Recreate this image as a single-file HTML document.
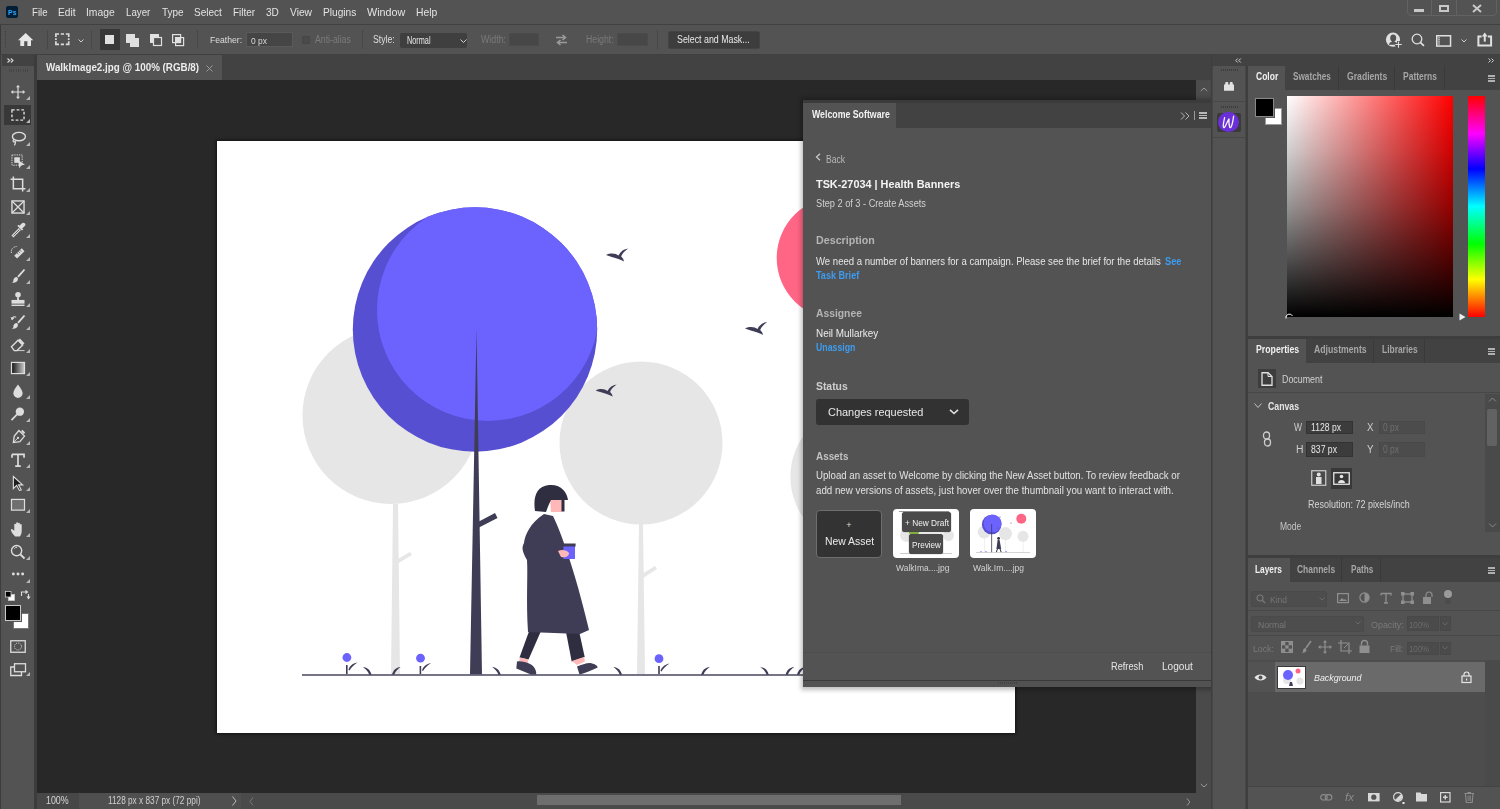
<!DOCTYPE html>
<html><head><meta charset="utf-8">
<style>
*{margin:0;padding:0;box-sizing:border-box}
html,body{width:1500px;height:809px;overflow:hidden;background:#535353;font-family:"Liberation Sans",sans-serif}
.a{position:absolute}
.t{position:absolute;white-space:nowrap;line-height:1;transform-origin:0 0}
svg.a{overflow:visible}
</style></head><body>
<div class="a" style="left:0px;top:0px;width:1500px;height:24px;background:#535353;"></div>
<div class="a" style="left:0px;top:23.5px;width:1500px;height:1.5px;background:#414141;"></div>
<div class="a" style="left:6px;top:6px;width:12px;height:12px;background:#001e36;border-radius:2px"></div>
<span class="t" style="left:7.5px;top:9.45px;font-size:7.5px;color:#31a8ff;font-weight:bold;transform:scaleX(0.9265);">Ps</span>
<span class="t" style="left:31.7px;top:7.41px;font-size:10.5px;color:#e3e3e3;transform:scaleX(0.9161);">File</span>
<span class="t" style="left:58px;top:7.41px;font-size:10.5px;color:#e3e3e3;transform:scaleX(0.9672);">Edit</span>
<span class="t" style="left:86.3px;top:7.41px;font-size:10.5px;color:#e3e3e3;transform:scaleX(0.9834);">Image</span>
<span class="t" style="left:126.2px;top:7.41px;font-size:10.5px;color:#e3e3e3;transform:scaleX(0.9251);">Layer</span>
<span class="t" style="left:161.7px;top:7.41px;font-size:10.5px;color:#e3e3e3;transform:scaleX(0.9488);">Type</span>
<span class="t" style="left:193.8px;top:7.41px;font-size:10.5px;color:#e3e3e3;transform:scaleX(0.9560);">Select</span>
<span class="t" style="left:232.5px;top:7.41px;font-size:10.5px;color:#e3e3e3;transform:scaleX(0.9514);">Filter</span>
<span class="t" style="left:265.8px;top:7.41px;font-size:10.5px;color:#e3e3e3;transform:scaleX(0.9611);">3D</span>
<span class="t" style="left:289.7px;top:7.41px;font-size:10.5px;color:#e3e3e3;transform:scaleX(0.9747);">View</span>
<span class="t" style="left:322.5px;top:7.41px;font-size:10.5px;color:#e3e3e3;transform:scaleX(0.9669);">Plugins</span>
<span class="t" style="left:366.7px;top:7.41px;font-size:10.5px;color:#e3e3e3;transform:scaleX(1.0256);">Window</span>
<span class="t" style="left:416.2px;top:7.41px;font-size:10.5px;color:#e3e3e3;transform:scaleX(0.9863);">Help</span>
<div class="a" style="left:1407px;top:-2px;width:90px;height:18px;background:transparent;border:1px solid #626262;border-radius:0 0 4px 4px"></div>
<div class="a" style="left:1431px;top:0px;width:1px;height:16px;background:#626262;"></div>
<div class="a" style="left:1456px;top:0px;width:1px;height:16px;background:#626262;"></div>
<div class="a" style="left:1414px;top:9px;width:10px;height:3px;background:#c8c8c8;"></div>
<div class="a" style="left:1439px;top:5px;width:10px;height:7px;background:transparent;border:2px solid #c8c8c8"></div>
<svg class="a" style="left:1472px;top:4px;" width="10" height="9" viewBox="0 0 10 9"><path d="M1 1L9 8M9 1L1 8" stroke="#c8c8c8" stroke-width="2"/></svg>
<div class="a" style="left:0px;top:25px;width:1500px;height:29px;background:#535353;"></div>
<div class="a" style="left:0px;top:25px;width:1px;height:29px;background:#3a3a3a;"></div>
<div class="a" style="left:0px;top:54px;width:1500px;height:1px;background:#404040;"></div>
<div class="a" style="left:5px;top:31px;width:1px;height:1px;background:#3e3e3e;"></div>
<div class="a" style="left:5px;top:33px;width:1px;height:1px;background:#3e3e3e;"></div>
<div class="a" style="left:5px;top:35px;width:1px;height:1px;background:#3e3e3e;"></div>
<div class="a" style="left:5px;top:37px;width:1px;height:1px;background:#3e3e3e;"></div>
<div class="a" style="left:5px;top:39px;width:1px;height:1px;background:#3e3e3e;"></div>
<div class="a" style="left:5px;top:41px;width:1px;height:1px;background:#3e3e3e;"></div>
<div class="a" style="left:5px;top:43px;width:1px;height:1px;background:#3e3e3e;"></div>
<div class="a" style="left:5px;top:45px;width:1px;height:1px;background:#3e3e3e;"></div>
<div class="a" style="left:5px;top:47px;width:1px;height:1px;background:#3e3e3e;"></div>
<svg class="a" style="left:18px;top:33px;" width="16" height="14" viewBox="0 0 16 14"><path d="M7.7 0L15.3 7.3H13V13.1H9.4V8.3H6.2V13.1H2.3V7.3H0Z" fill="#e6e6e6"/></svg>
<div class="a" style="left:47px;top:30px;width:1px;height:19px;background:#474747;"></div>
<svg class="a" style="left:55px;top:33px;" width="15" height="13" viewBox="0 0 15 13"><path d="M0.9 4V1H4M5.8 1H9M10.8 1H13.7V4M13.7 5.3V7M13.7 8.3V11.3H10.8M9 11.3H5.8M4 11.3H0.9V8.3M0.9 5.3V7" fill="none" stroke="#dcdcdc" stroke-width="1.7"/></svg>
<svg class="a" style="left:78px;top:39px;" width="6" height="4" viewBox="0 0 6 4"><path d="M0.5 0.5L3 3L5.5 0.5" fill="none" stroke="#cfcfcf" stroke-width="1"/></svg>
<div class="a" style="left:91px;top:30px;width:1px;height:19px;background:#474747;"></div>
<div class="a" style="left:100px;top:29px;width:20px;height:21px;background:#383838;"></div>
<div class="a" style="left:105px;top:35px;width:9px;height:9px;background:#e0e0e0;"></div>
<svg class="a" style="left:126px;top:34px;" width="14" height="13" viewBox="0 0 14 13"><rect x="0" y="0" width="9" height="9" fill="#e0e0e0"/><rect x="4" y="4" width="9" height="9" fill="#e0e0e0"/></svg>
<svg class="a" style="left:150px;top:34px;" width="13" height="13" viewBox="0 0 13 13"><rect x="0" y="0" width="9" height="9" fill="#e0e0e0"/><rect x="3.5" y="3.5" width="8" height="8" fill="#535353" stroke="#e0e0e0" stroke-width="1.2"/></svg>
<svg class="a" style="left:172px;top:34px;" width="13" height="13" viewBox="0 0 13 13"><rect x="0.6" y="0.6" width="8" height="8" fill="none" stroke="#e0e0e0" stroke-width="1.2"/><rect x="3.6" y="3.6" width="8" height="8" fill="none" stroke="#e0e0e0" stroke-width="1.2"/><rect x="3.6" y="3.6" width="5" height="5" fill="#e0e0e0"/></svg>
<div class="a" style="left:197px;top:30px;width:1px;height:19px;background:#474747;"></div>
<span class="t" style="left:209.6px;top:35.46px;font-size:9.5px;color:#dedede;transform:scaleX(0.9073);">Feather:</span>
<div class="a" style="left:246px;top:32px;width:47px;height:15px;background:#454545;border:1px solid #5a5a5a"></div>
<span class="t" style="left:250.5px;top:35.76px;font-size:9.5px;color:#d8d8d8;transform:scaleX(0.8910);">0 px</span>
<div class="a" style="left:302px;top:36px;width:8px;height:8px;background:#4a4a4a;border:1px solid #464646"></div>
<span class="t" style="left:314.5px;top:35.33px;font-size:10px;color:#7b7b7b;transform:scaleX(0.8704);">Anti-alias</span>
<div class="a" style="left:362px;top:30px;width:1px;height:19px;background:#474747;"></div>
<span class="t" style="left:372.7px;top:35.03px;font-size:10px;color:#dedede;transform:scaleX(0.8676);">Style:</span>
<div class="a" style="left:400px;top:33px;width:67px;height:15px;background:#3f3f3f;border-radius:2px"></div>
<span class="t" style="left:407.2px;top:35.94px;font-size:10px;color:#e8e8e8;transform:scaleX(0.7292);">Normal</span>
<svg class="a" style="left:460px;top:39px;" width="7" height="5" viewBox="0 0 7 5"><path d="M0.5 0.5L3.5 3.5L6.5 0.5" fill="none" stroke="#d0d0d0" stroke-width="1"/></svg>
<span class="t" style="left:481px;top:35.33px;font-size:10px;color:#7a7a7a;transform:scaleX(0.8822);">Width:</span>
<div class="a" style="left:509px;top:33px;width:30px;height:13px;background:#474747;border:1px solid #4b4b4b"></div>
<svg class="a" style="left:555px;top:34px;" width="13" height="12" viewBox="0 0 13 12"><path d="M1 3.5H10M7.5 1L10.5 3.5L7.5 6M12 8.5H3M5.5 6L2.5 8.5L5.5 11" fill="none" stroke="#9a9a9a" stroke-width="1.6"/></svg>
<span class="t" style="left:586.4px;top:35.33px;font-size:10px;color:#7a7a7a;transform:scaleX(0.8711);">Height:</span>
<div class="a" style="left:617px;top:33px;width:31px;height:13px;background:#474747;border:1px solid #4b4b4b"></div>
<div class="a" style="left:657px;top:30px;width:1px;height:19px;background:#474747;"></div>
<div class="a" style="left:668px;top:31px;width:92px;height:18px;background:#3d3d3d;border:1px solid #444;border-radius:2px"></div>
<span class="t" style="left:677.4px;top:35.33px;font-size:10px;color:#e8e8e8;transform:scaleX(0.8825);">Select and Mask...</span>
<svg class="a" style="left:1386px;top:32px;" width="17" height="16" viewBox="0 0 17 16"><circle cx="7" cy="7.7" r="7.1" fill="#e0e0e0"/><ellipse cx="7.2" cy="6" rx="3" ry="3.6" fill="#535353"/><rect x="6" y="8.5" width="2.4" height="2" fill="#535353"/><path d="M2.8 12.8C3.5 10.5 5 9.6 7.2 9.6C9.4 9.6 11 10.5 11.6 12.8Z" fill="#535353"/><path d="M12.5 9V16M9 12.5H16" stroke="#535353" stroke-width="3"/><path d="M12.5 9.5V15.8M9.3 12.5H15.8" stroke="#e0e0e0" stroke-width="1.1"/></svg>
<svg class="a" style="left:1410.8px;top:33px;" width="15" height="15" viewBox="0 0 15 15"><circle cx="6" cy="6" r="4.8" fill="none" stroke="#e0e0e0" stroke-width="1.3"/><path d="M9.3 9.3L13 12.8" stroke="#e0e0e0" stroke-width="1.7"/></svg>
<svg class="a" style="left:1436px;top:34.5px;" width="16" height="12" viewBox="0 0 16 12"><rect x="0.75" y="0.75" width="13.8" height="10.3" fill="none" stroke="#e0e0e0" stroke-width="1.5"/><rect x="2.2" y="2.2" width="1.6" height="7.4" fill="#d0d0d0"/><circle cx="3" cy="3.6" r="0.7" fill="#535353"/><circle cx="3" cy="5.8" r="0.7" fill="#535353"/><circle cx="3" cy="8" r="0.7" fill="#535353"/></svg>
<svg class="a" style="left:1460.5px;top:38.5px;" width="6" height="4" viewBox="0 0 6 4"><path d="M0.5 0.5L3 3L5.5 0.5" fill="none" stroke="#cfcfcf" stroke-width="1"/></svg>
<svg class="a" style="left:1477px;top:31.5px;" width="16" height="16" viewBox="0 0 16 16"><path d="M4.6 4.6H1.4V13.6H14.1V4.6H10.9" fill="none" stroke="#e0e0e0" stroke-width="2"/><path d="M7.75 3V9.7" stroke="#e0e0e0" stroke-width="2"/><path d="M4.8 4.4L7.75 0.4L10.7 4.4Z" fill="#e0e0e0"/></svg>
<div class="a" style="left:0px;top:55px;width:37px;height:754px;background:#3c3c3c;"></div>
<div class="a" style="left:1px;top:55px;width:33px;height:754px;background:#535353;"></div>
<div class="a" style="left:2px;top:55px;width:32px;height:11px;background:#424242;"></div>
<svg class="a" style="left:6.5px;top:57.5px;" width="7" height="6" viewBox="0 0 7 6"><path d="M0.5 0.5L2.8 2.5L0.5 4.5M3.8 0.5L6 2.5L3.8 4.5" fill="none" stroke="#d8d8d8" stroke-width="1.1"/></svg>
<div class="a" style="left:9px;top:69px;width:1px;height:3px;background:#474747;"></div>
<div class="a" style="left:11px;top:69px;width:1px;height:3px;background:#474747;"></div>
<div class="a" style="left:13px;top:69px;width:1px;height:3px;background:#474747;"></div>
<div class="a" style="left:16px;top:69px;width:1px;height:3px;background:#474747;"></div>
<div class="a" style="left:18px;top:69px;width:1px;height:3px;background:#474747;"></div>
<div class="a" style="left:20px;top:69px;width:1px;height:3px;background:#474747;"></div>
<div class="a" style="left:23px;top:69px;width:1px;height:3px;background:#474747;"></div>
<div class="a" style="left:25px;top:69px;width:1px;height:3px;background:#474747;"></div>
<div class="a" style="left:27px;top:69px;width:1px;height:3px;background:#474747;"></div>
<div class="a" style="left:4px;top:105px;width:27px;height:20px;background:#383838;"></div>
<svg class="a" style="left:9.3px;top:83px;" width="18" height="18" viewBox="0 0 18 18"><g transform="translate(9 9) scale(0.93) translate(-9 -9)"><g transform="translate(9 9) scale(0.85) translate(-9 -9)"><path d="M9 1V17M1 9H17" stroke="#ddd" stroke-width="1.5"/><path d="M9 0L6.5 3H11.5ZM9 18L6.5 15H11.5ZM0 9L3 6.5V11.5ZM18 9L15 6.5V11.5Z" fill="#ddd"/></g></g></svg>
<svg class="a" style="left:26px;top:96px;" width="4" height="4" viewBox="0 0 4 4"><path d="M4 0V4H0Z" fill="#b8b8b8"/></svg>
<svg class="a" style="left:9.3px;top:106px;" width="18" height="18" viewBox="0 0 18 18"><g transform="translate(9 9) scale(0.93) translate(-9 -9)"><rect x="2.5" y="3.5" width="13" height="11" fill="none" stroke="#ddd" stroke-width="1.5" stroke-dasharray="3 2"/></g></svg>
<svg class="a" style="left:26px;top:119px;" width="4" height="4" viewBox="0 0 4 4"><path d="M4 0V4H0Z" fill="#b8b8b8"/></svg>
<svg class="a" style="left:9.3px;top:129px;" width="18" height="18" viewBox="0 0 18 18"><g transform="translate(9 9) scale(0.93) translate(-9 -9)"><ellipse cx="10" cy="7.5" rx="7" ry="4.5" fill="none" stroke="#ddd" stroke-width="1.5"/><path d="M4.5 10.5C3 12 4 14 5.5 13S6 16 5 17" fill="none" stroke="#ddd" stroke-width="1.3"/></g></svg>
<svg class="a" style="left:26px;top:142px;" width="4" height="4" viewBox="0 0 4 4"><path d="M4 0V4H0Z" fill="#b8b8b8"/></svg>
<svg class="a" style="left:9.3px;top:152px;" width="18" height="18" viewBox="0 0 18 18"><g transform="translate(9 9) scale(0.93) translate(-9 -9)"><rect x="2.5" y="2.5" width="11" height="11" fill="none" stroke="#ddd" stroke-width="1" stroke-dasharray="1.5 1"/><rect x="5" y="5" width="6" height="6" fill="#ddd"/><path d="M9 8L16.5 13L12.5 13.5L10.5 17Z" fill="#ddd"/></g></svg>
<svg class="a" style="left:26px;top:165px;" width="4" height="4" viewBox="0 0 4 4"><path d="M4 0V4H0Z" fill="#b8b8b8"/></svg>
<svg class="a" style="left:9.3px;top:175px;" width="18" height="18" viewBox="0 0 18 18"><g transform="translate(9 9) scale(0.93) translate(-9 -9)"><path d="M4 1V14H17M1 4H14V17" fill="none" stroke="#ddd" stroke-width="1.6"/></g></svg>
<svg class="a" style="left:26px;top:188px;" width="4" height="4" viewBox="0 0 4 4"><path d="M4 0V4H0Z" fill="#b8b8b8"/></svg>
<svg class="a" style="left:9.3px;top:198px;" width="18" height="18" viewBox="0 0 18 18"><g transform="translate(9 9) scale(0.93) translate(-9 -9)"><rect x="2.5" y="2.5" width="13" height="13" fill="none" stroke="#ddd" stroke-width="1.5"/><path d="M2.5 2.5L15.5 15.5M15.5 2.5L2.5 15.5" stroke="#ddd" stroke-width="1.3"/></g></svg>
<svg class="a" style="left:26px;top:211px;" width="4" height="4" viewBox="0 0 4 4"><path d="M4 0V4H0Z" fill="#b8b8b8"/></svg>
<svg class="a" style="left:9.3px;top:221px;" width="18" height="18" viewBox="0 0 18 18"><g transform="translate(9 9) scale(0.93) translate(-9 -9)"><path d="M3 16L11 8" stroke="#ddd" stroke-width="3"/><path d="M4 15L10.5 8.5" stroke="#535353" stroke-width="1"/><path d="M10 5L13 2C14 1 15.5 1 16.5 2S17 4 16 5L13 8Z" fill="#ddd"/><path d="M9 4L14 9" stroke="#ddd" stroke-width="1.8"/></g></svg>
<svg class="a" style="left:26px;top:234px;" width="4" height="4" viewBox="0 0 4 4"><path d="M4 0V4H0Z" fill="#b8b8b8"/></svg>
<svg class="a" style="left:9.3px;top:244px;" width="18" height="18" viewBox="0 0 18 18"><g transform="translate(9 9) scale(0.93) translate(-9 -9)"><path d="M5 12L13 4L16 7L8 15Z" fill="#ddd"/><path d="M2 9C1 5 4 2 8 2" fill="none" stroke="#ddd" stroke-width="1" stroke-dasharray="1.5 1"/><path d="M9 7L11 9M7.5 8.5L9.5 10.5M10.5 5.5L12.5 7.5" stroke="#535353" stroke-width="0.8"/></g></svg>
<svg class="a" style="left:26px;top:257px;" width="4" height="4" viewBox="0 0 4 4"><path d="M4 0V4H0Z" fill="#b8b8b8"/></svg>
<svg class="a" style="left:9.3px;top:267px;" width="18" height="18" viewBox="0 0 18 18"><g transform="translate(9 9) scale(0.93) translate(-9 -9)"><path d="M16 2L9 10" stroke="#ddd" stroke-width="2"/><path d="M8 10C5 10 4 12 4 14C4 15.5 2.5 16 2 16C5 17 9 15.5 9 12Z" fill="#ddd"/></g></svg>
<svg class="a" style="left:26px;top:280px;" width="4" height="4" viewBox="0 0 4 4"><path d="M4 0V4H0Z" fill="#b8b8b8"/></svg>
<svg class="a" style="left:9.3px;top:290px;" width="18" height="18" viewBox="0 0 18 18"><g transform="translate(9 9) scale(0.93) translate(-9 -9)"><circle cx="9" cy="4.5" r="3" fill="#ddd"/><path d="M8 7H10V10H8Z" fill="#ddd"/><rect x="2" y="10" width="14" height="4" fill="#ddd"/><rect x="2" y="15" width="14" height="1.5" fill="#ddd"/></g></svg>
<svg class="a" style="left:26px;top:303px;" width="4" height="4" viewBox="0 0 4 4"><path d="M4 0V4H0Z" fill="#b8b8b8"/></svg>
<svg class="a" style="left:9.3px;top:313px;" width="18" height="18" viewBox="0 0 18 18"><g transform="translate(9 9) scale(0.93) translate(-9 -9)"><path d="M16 2L9 10" stroke="#ddd" stroke-width="2"/><path d="M8 10C5 10 4 12 4 14C4 15.5 2.5 16 2 16C5 17 9 15.5 9 12Z" fill="#ddd"/><path d="M2 6C3 3 6 3 7 4" fill="none" stroke="#ddd" stroke-width="1.2"/><path d="M1 4L2.5 7L5 5Z" fill="#ddd"/></g></svg>
<svg class="a" style="left:26px;top:326px;" width="4" height="4" viewBox="0 0 4 4"><path d="M4 0V4H0Z" fill="#b8b8b8"/></svg>
<svg class="a" style="left:9.3px;top:336px;" width="18" height="18" viewBox="0 0 18 18"><g transform="translate(9 9) scale(0.93) translate(-9 -9)"><path d="M2 11L9 4L14 9L8 15H5Z" fill="none" stroke="#ddd" stroke-width="1.5"/><path d="M9 4L11 2L16 7L14 9Z" fill="#ddd"/><path d="M8 15H16" stroke="#ddd" stroke-width="1"/></g></svg>
<svg class="a" style="left:26px;top:349px;" width="4" height="4" viewBox="0 0 4 4"><path d="M4 0V4H0Z" fill="#b8b8b8"/></svg>
<svg class="a" style="left:9.3px;top:359px;" width="18" height="18" viewBox="0 0 18 18"><g transform="translate(9 9) scale(0.93) translate(-9 -9)"><defs><linearGradient id="gg"><stop offset="0" stop-color="#111"/><stop offset="1" stop-color="#ccc"/></linearGradient></defs><rect x="2" y="3" width="14" height="12" fill="url(#gg)" stroke="#ddd" stroke-width="1.3"/></g></svg>
<svg class="a" style="left:26px;top:372px;" width="4" height="4" viewBox="0 0 4 4"><path d="M4 0V4H0Z" fill="#b8b8b8"/></svg>
<svg class="a" style="left:9.3px;top:382px;" width="18" height="18" viewBox="0 0 18 18"><g transform="translate(9 9) scale(0.93) translate(-9 -9)"><path d="M9 2C9 2 4 8 4 11.5A5 5 0 0 0 14 11.5C14 8 9 2 9 2Z" fill="#ddd"/></g></svg>
<svg class="a" style="left:26px;top:395px;" width="4" height="4" viewBox="0 0 4 4"><path d="M4 0V4H0Z" fill="#b8b8b8"/></svg>
<svg class="a" style="left:9.3px;top:405px;" width="18" height="18" viewBox="0 0 18 18"><g transform="translate(9 9) scale(0.93) translate(-9 -9)"><circle cx="11" cy="6.5" r="4.5" fill="#ddd"/><path d="M8 9.5L2 15.5" stroke="#ddd" stroke-width="1.8"/></g></svg>
<svg class="a" style="left:26px;top:418px;" width="4" height="4" viewBox="0 0 4 4"><path d="M4 0V4H0Z" fill="#b8b8b8"/></svg>
<svg class="a" style="left:9.3px;top:428px;" width="18" height="18" viewBox="0 0 18 18"><g transform="translate(9 9) scale(0.93) translate(-9 -9)"><path d="M10 2L16 8L11 14L4 15L5 8Z" fill="none" stroke="#ddd" stroke-width="1.4"/><path d="M13 2L16 5" stroke="#ddd" stroke-width="2"/><circle cx="9" cy="10" r="1.2" fill="#ddd"/><path d="M4 15L9 10" stroke="#ddd" stroke-width="1"/></g></svg>
<svg class="a" style="left:26px;top:441px;" width="4" height="4" viewBox="0 0 4 4"><path d="M4 0V4H0Z" fill="#b8b8b8"/></svg>
<svg class="a" style="left:9.3px;top:451px;" width="18" height="18" viewBox="0 0 18 18"><g transform="translate(9 9) scale(0.93) translate(-9 -9)"><path d="M2.5 3H15.5V6.5M2.5 3V6.5M9 3V15.5M6 15.5H12" fill="none" stroke="#ddd" stroke-width="1.8"/></g></svg>
<svg class="a" style="left:26px;top:464px;" width="4" height="4" viewBox="0 0 4 4"><path d="M4 0V4H0Z" fill="#b8b8b8"/></svg>
<svg class="a" style="left:9.3px;top:474px;" width="18" height="18" viewBox="0 0 18 18"><g transform="translate(9 9) scale(0.93) translate(-9 -9)"><path d="M4 2L14 11H9.5L12.5 16.5L10.5 17L7.5 11.5L4 15Z" fill="#1d1d1d" stroke="#ddd" stroke-width="1.2"/></g></svg>
<svg class="a" style="left:26px;top:487px;" width="4" height="4" viewBox="0 0 4 4"><path d="M4 0V4H0Z" fill="#b8b8b8"/></svg>
<svg class="a" style="left:9.3px;top:496px;" width="18" height="18" viewBox="0 0 18 18"><g transform="translate(9 9) scale(0.93) translate(-9 -9)"><rect x="2" y="3" width="14" height="11.5" fill="#6f6f6f" stroke="#ddd" stroke-width="1.3"/></g></svg>
<svg class="a" style="left:26px;top:509px;" width="4" height="4" viewBox="0 0 4 4"><path d="M4 0V4H0Z" fill="#b8b8b8"/></svg>
<svg class="a" style="left:9.3px;top:520px;" width="18" height="18" viewBox="0 0 18 18"><g transform="translate(9 9) scale(0.93) translate(-9 -9)"><path d="M5 16C3 14 1 11 1.5 9.5S4 10 5 11V4C5 3 7 3 7 4V9V2.5C7 1.5 9 1.5 9 2.5V9V3C9 2 11 2 11 3V9V4.5C11 3.5 13 3.5 13 4.5V11C13 14 12 16 11 17H6Z" fill="#ddd"/></g></svg>
<svg class="a" style="left:26px;top:533px;" width="4" height="4" viewBox="0 0 4 4"><path d="M4 0V4H0Z" fill="#b8b8b8"/></svg>
<svg class="a" style="left:9.3px;top:543px;" width="18" height="18" viewBox="0 0 18 18"><g transform="translate(9 9) scale(0.93) translate(-9 -9)"><circle cx="7.5" cy="7.5" r="5.5" fill="none" stroke="#ddd" stroke-width="1.5"/><path d="M11.5 11.5L16 16" stroke="#ddd" stroke-width="2"/><path d="M5 5.5A3 3 0 0 1 8 4" fill="none" stroke="#ddd" stroke-width="1"/></g></svg>
<svg class="a" style="left:26px;top:556px;" width="4" height="4" viewBox="0 0 4 4"><path d="M4 0V4H0Z" fill="#b8b8b8"/></svg>
<svg class="a" style="left:9.3px;top:566px;" width="18" height="18" viewBox="0 0 18 18"><g transform="translate(9 9) scale(0.93) translate(-9 -9)"><circle cx="4" cy="8" r="1.6" fill="#ddd"/><circle cx="9" cy="8" r="1.6" fill="#ddd"/><circle cx="14" cy="8" r="1.6" fill="#ddd"/></g></svg>
<svg class="a" style="left:26px;top:579px;" width="4" height="4" viewBox="0 0 4 4"><path d="M4 0V4H0Z" fill="#b8b8b8"/></svg>
<svg class="a" style="left:5px;top:591px;" width="10" height="10" viewBox="0 0 10 10"><rect x="3.5" y="3.5" width="6" height="6" fill="#fff" stroke="#ccc" stroke-width="0.8"/><rect x="0.5" y="0.5" width="5.5" height="5.5" fill="#000" stroke="#ccc" stroke-width="0.8"/></svg>
<svg class="a" style="left:20px;top:590px;" width="10" height="10" viewBox="0 0 10 10"><path d="M1.5 6V2H7M5.5 0.5L7.5 2L5.5 3.5M8.5 4V8.5M7 6.5L8.5 8.5L10 6.5" fill="none" stroke="#ddd" stroke-width="1.1"/></svg>
<div class="a" style="left:13px;top:613px;width:16px;height:16px;background:#fff;border:1px solid #777"></div>
<div class="a" style="left:5px;top:605px;width:16px;height:16px;background:#000;border:1px solid #c8c8c8;box-shadow:0 0 0 1px #555"></div>
<svg class="a" style="left:10px;top:640px;" width="16" height="14" viewBox="0 0 16 14"><rect x="0.75" y="0.75" width="14.5" height="11.5" fill="none" stroke="#ddd" stroke-width="1.3"/><circle cx="8" cy="6.5" r="3.5" fill="none" stroke="#ddd" stroke-width="1" stroke-dasharray="1 1"/></svg>
<svg class="a" style="left:10px;top:663px;" width="17" height="14" viewBox="0 0 17 14"><rect x="4.5" y="0.75" width="11" height="8" fill="none" stroke="#ddd" stroke-width="1.3"/><path d="M4.5 4H0.75V12.5H11.5V8.75" fill="none" stroke="#ddd" stroke-width="1.3"/></svg>
<svg class="a" style="left:26px;top:672px;" width="4" height="4" viewBox="0 0 4 4"><path d="M4 0V4H0Z" fill="#b8b8b8"/></svg>
<div class="a" style="left:37px;top:55px;width:1175px;height:25px;background:#424242;"></div>
<div class="a" style="left:37px;top:55px;width:185px;height:25px;background:#535353;"></div>
<span class="t" style="left:46.1px;top:63.23px;font-size:10px;color:#ececec;font-weight:bold;transform:scaleX(0.9808);">WalkImage2.jpg @ 100% (RGB/8)</span>
<svg class="a" style="left:206px;top:65px;" width="7" height="7" viewBox="0 0 7 7"><path d="M0.5 0.5L6.5 6.5M6.5 0.5L0.5 6.5" stroke="#9a9a9a" stroke-width="1"/></svg>
<div class="a" style="left:37px;top:80px;width:1159px;height:713px;background:#282828;"></div>
<div class="a" style="left:217px;top:141px;width:798px;height:592px;background:#ffffff;box-shadow:0 0 3px 1px rgba(0,0,0,.55)"></div>
<div class="a" style="left:1196px;top:80px;width:15px;height:713px;background:#4a4a4a;"></div>
<div class="a" style="left:1196px;top:81px;width:14px;height:18.5px;background:#4c4c4c;"></div>
<svg class="a" style="left:1200px;top:87px;" width="8" height="5" viewBox="0 0 8 5"><path d="M0.8 4L4 1L7.2 4" fill="none" stroke="#9a9a9a" stroke-width="1"/></svg>
<svg class="a" style="left:1200px;top:782.5px;" width="8" height="5" viewBox="0 0 8 5"><path d="M0.8 1L4 4L7.2 1" fill="none" stroke="#9a9a9a" stroke-width="1"/></svg>
<div class="a" style="left:37px;top:793px;width:1175px;height:16px;background:#4a4a4a;"></div>
<div class="a" style="left:37px;top:793px;width:42px;height:16px;background:#474747;"></div>
<div class="a" style="left:79px;top:793px;width:162px;height:16px;background:#4f4f4f;"></div>
<span class="t" style="left:46.1px;top:795.53px;font-size:10px;color:#d6d6d6;transform:scaleX(0.8875);">100%</span>
<span class="t" style="left:107.5px;top:795.53px;font-size:10px;color:#cfcfcf;transform:scaleX(0.8251);">1128 px x 837 px (72 ppi)</span>
<svg class="a" style="left:232px;top:796px;" width="5" height="10" viewBox="0 0 5 10"><path d="M0.5 0.5L4 5L0.5 9.5" fill="none" stroke="#bbb" stroke-width="1"/></svg>
<svg class="a" style="left:249px;top:797px;" width="5" height="9" viewBox="0 0 5 9"><path d="M4 0.5L1 4.5L4 8.5" fill="none" stroke="#777" stroke-width="1"/></svg>
<div class="a" style="left:537px;top:795px;width:364px;height:10px;background:#6e6e6e;"></div>
<svg class="a" style="left:1185.5px;top:797.5px;" width="5" height="8" viewBox="0 0 5 8"><path d="M1 0.5L3.8 4L1 7.5" fill="none" stroke="#999" stroke-width="1"/></svg>
<div class="a" style="left:1196px;top:793px;width:15px;height:16px;background:#4a4a4a;"></div>
<svg class="a" style="left:217px;top:141px;" width="798" height="592" viewBox="0 0 798 592"><g transform="translate(-217 -141)">
<circle cx="391" cy="415.5" r="88.5" fill="#e6e6e6"/>
<path d="M393 504L391 674.5H400L398 504Z" fill="#e6e6e6"/>
<path d="M396 560L410 552L412 555L397 564Z" fill="#e6e6e6"/>
<circle cx="641" cy="443" r="81.5" fill="#e6e6e6"/>
<path d="M639 524L637 674.5H645L643 524Z" fill="#e6e6e6"/>
<path d="M642 574L655 566L657 569L643 578Z" fill="#e6e6e6"/>
<circle cx="861.6" cy="476.7" r="71.2" fill="#e6e6e6"/>
<circle cx="838.2" cy="258" r="61.5" fill="#ff6584"/>
<circle cx="475" cy="329.5" r="122.2" fill="#574fd1"/>
<clipPath id="bc"><circle cx="475" cy="329.5" r="122.2"/></clipPath>
<circle cx="488" cy="310" r="111" fill="#6c63ff" clip-path="url(#bc)"/>
<path d="M476.5 329L470 674.5H482Z" fill="#3f3d56"/>
<path d="M478 522L495 513L497.5 518L478 528Z" fill="#3f3d56"/>
<rect x="302" y="674.2" width="520" height="1.6" fill="#55546a"/>
<circle cx="346.9" cy="657.5" r="4.4" fill="#6c63ff"/><rect x="346" y="665" width="1.6" height="9" fill="#3f3d56"/>
<path d="M348.5 670C349.5 666 352 663.5 357.5 662.5C353.5 665 351 668 349.5 670.5Z" fill="#3f3d56"/>
<circle cx="420.5" cy="658.2" r="4.4" fill="#6c63ff"/><rect x="419.6" y="666" width="1.6" height="8" fill="#3f3d56"/>
<path d="M422 670.5C423 667 425.5 664.5 431 663C427 665.5 424.5 668.5 423 671Z" fill="#3f3d56"/>
<circle cx="659" cy="658.7" r="4.4" fill="#6c63ff"/><rect x="658.2" y="666" width="1.6" height="8" fill="#3f3d56"/>
<path d="M660.5 671C661.5 667.5 664 665 669.5 663.5C665.5 666 663 669 661.5 671.5Z" fill="#3f3d56"/>
<path d="M371.5 674.8C370.3 670 367.5 667.5 362.9 667C365.5 668.8 368.0 671 369.3 674.8Z" fill="#3f3d56"/><path d="M392 674.8C393.2 670 396 667.5 400.6 667C398 668.8 395.5 671 394.2 674.8Z" fill="#3f3d56"/><path d="M500.7 674.8C499.5 670 496.7 667.5 492.09999999999997 667C494.7 668.8 497.2 671 498.5 674.8Z" fill="#3f3d56"/><path d="M622 674.8C620.8 670 618 667.5 613.4 667C616 668.8 618.5 671 619.8 674.8Z" fill="#3f3d56"/><path d="M701.2 674.8C702.4000000000001 670 705.2 667.5 709.8000000000001 667C707.2 668.8 704.7 671 703.4000000000001 674.8Z" fill="#3f3d56"/><path d="M768.8 674.8C767.5999999999999 670 764.8 667.5 760.1999999999999 667C762.8 668.8 765.3 671 766.5999999999999 674.8Z" fill="#3f3d56"/><path d="M785.6 674.8C786.8000000000001 670 789.6 667.5 794.2 667C791.6 668.8 789.1 671 787.8000000000001 674.8Z" fill="#3f3d56"/><path d="M797 674.8C798.2 670 801 667.5 805.6 667C803 668.8 800.5 671 799.2 674.8Z" fill="#3f3d56"/>
<path transform="translate(618 255.5) scale(1)" d="M-12 -0.6C-7 -3 -2 -2 0.5 0C2.5 -4 6 -6.5 10.2 -6.9C7 -4.5 4 -2 3.2 1C4.8 2.5 5.8 4.2 6 5.9C3 3.8 -4 2.2 -12 -0.6Z" fill="#3f3d56"/><path transform="translate(757 329) scale(1)" d="M-12 -0.6C-7 -3 -2 -2 0.5 0C2.5 -4 6 -6.5 10.2 -6.9C7 -4.5 4 -2 3.2 1C4.8 2.5 5.8 4.2 6 5.9C3 3.8 -4 2.2 -12 -0.6Z" fill="#3f3d56"/><path transform="translate(607 391) scale(0.95)" d="M-12 -0.6C-7 -3 -2 -2 0.5 0C2.5 -4 6 -6.5 10.2 -6.9C7 -4.5 4 -2 3.2 1C4.8 2.5 5.8 4.2 6 5.9C3 3.8 -4 2.2 -12 -0.6Z" fill="#3f3d56"/>
<!-- woman -->
<path d="M541 631L529.5 630L519.5 657.5L528.5 659.5Z" fill="#2f2e41"/>
<path d="M566 632L579 631L584.7 657L571.7 661.5Z" fill="#2f2e41"/>
<path d="M520 657.5L528.5 659.5L527.5 663L519 661.5Z" fill="#ffb8b8"/>
<path d="M572 661L584 657L585 661.5L577 665Z" fill="#ffb8b8"/>
<path d="M517 661.5C521 661 526 662 530 664C534 666 536.5 670 536.2 674.5L531 674.5L516.3 668.5Z" fill="#3f3d56"/>
<path d="M577 666.5C581 665 586 663 590 663C594 663.5 597.5 665.5 597.7 667.5C592 670 585 673 579.5 674.5Z" fill="#3f3d56"/>
<path d="M544 514L553 516C560 530 575 570 589 630L580 634L528 632C526 600 528 575 527 560C523 553 521 548 524 543C525 535 530 523 544 514Z" fill="#3f3d56"/>
<path d="M527 545C533 550 545 553 560 552L561 557C545 558 530 556 524 551Z" fill="#3f3d56"/>
<rect x="563.4" y="545" width="11.6" height="14" fill="#6c63ff"/>
<rect x="562.8" y="543.5" width="12.8" height="3" fill="#3f3d56"/>
<path d="M558 551C562 549 567 550 569 553C569 556 566 558 561 557Z" fill="#ffb8b8"/>
<path d="M550 499H562V512H551Z" fill="#ffb8b8"/>
<path d="M535 511C533 498 536 486 549 485C561 484 567 492 568 500H564.5V511.5H561.5V500H551C549 504 547 509 546 512Z" fill="#2f2e41"/>
</g></svg>
<div class="a" style="left:801px;top:98px;width:412px;height:592px;background:rgba(0,0,0,0.25);filter:blur(2px)"></div>
<div class="a" style="left:803px;top:100px;width:408px;height:587px;background:#535353;"></div>
<div class="a" style="left:803px;top:100px;width:408px;height:3px;background:#3b3b3b;"></div>
<div class="a" style="left:803px;top:103px;width:408px;height:25px;background:#424242;"></div>
<div class="a" style="left:803px;top:103px;width:93px;height:25px;background:#535353;"></div>
<span class="t" style="left:812px;top:109.83px;font-size:10px;color:#f2f2f2;font-weight:bold;transform:scaleX(0.8768);">Welcome Software</span>
<svg class="a" style="left:1180px;top:112px;" width="10" height="8" viewBox="0 0 10 8"><path d="M1 0.5L4.5 4L1 7.5M5.5 0.5L9 4L5.5 7.5" fill="none" stroke="#b5b5b5" stroke-width="1"/></svg>
<div class="a" style="left:1194px;top:111px;width:1px;height:9px;background:#9a9a9a;"></div>
<div class="a" style="left:1199px;top:112px;width:8px;height:1.5px;background:#b8b8b8;"></div>
<div class="a" style="left:1199px;top:114.5px;width:8px;height:1.5px;background:#b8b8b8;"></div>
<div class="a" style="left:1199px;top:117px;width:8px;height:1.5px;background:#b8b8b8;"></div>
<svg class="a" style="left:815px;top:153px;" width="6" height="8" viewBox="0 0 6 8"><path d="M5 0.8L1.5 4L5 7.2" fill="none" stroke="#c8c8c8" stroke-width="1.3"/></svg>
<span class="t" style="left:825.8px;top:153.61px;font-size:10.5px;color:#b9b9b9;transform:scaleX(0.8182);">Back</span>
<span class="t" style="left:815.6px;top:178.87px;font-size:11.5px;color:#f4f4f4;font-weight:bold;transform:scaleX(0.9439);">TSK-27034 | Health Banners</span>
<span class="t" style="left:815.6px;top:199.03px;font-size:10px;color:#d0d0d0;transform:scaleX(0.9196);">Step 2 of 3 - Create Assets</span>
<span class="t" style="left:815.6px;top:235.27px;font-size:11.5px;color:#b4b4b4;font-weight:bold;transform:scaleX(0.9310);">Description</span>
<span class="t" style="left:815.6px;top:256.54px;font-size:10px;color:#e6e6e6;transform:scaleX(0.9562);">We need a number of banners for a campaign. Please see the brief for the details</span>
<span class="t" style="left:1165.2px;top:256.54px;font-size:10px;color:#3d9cf0;font-weight:bold;transform:scaleX(0.9217);">See</span>
<span class="t" style="left:815.6px;top:271.34px;font-size:10px;color:#3d9cf0;font-weight:bold;transform:scaleX(0.9073);">Task Brief</span>
<span class="t" style="left:815.6px;top:308.47px;font-size:11.5px;color:#b4b4b4;font-weight:bold;transform:scaleX(0.8976);">Assignee</span>
<span class="t" style="left:815.6px;top:329.04px;font-size:10px;color:#ececec;transform:scaleX(0.9905);">Neil Mullarkey</span>
<span class="t" style="left:815.6px;top:342.94px;font-size:10px;color:#3d9cf0;font-weight:bold;transform:scaleX(0.8753);">Unassign</span>
<span class="t" style="left:815.6px;top:381.07px;font-size:11.5px;color:#cfcfcf;font-weight:bold;transform:scaleX(0.9019);">Status</span>
<div class="a" style="left:816px;top:398.5px;width:153px;height:26px;background:#323232;border-radius:3px"></div>
<span class="t" style="left:827.6px;top:407.07px;font-size:11.5px;color:#e8e8e8;transform:scaleX(0.9504);">Changes requested</span>
<svg class="a" style="left:949px;top:409px;" width="10" height="6" viewBox="0 0 10 6"><path d="M1 0.8L5 4.5L9 0.8" fill="none" stroke="#e0e0e0" stroke-width="1.6"/></svg>
<span class="t" style="left:815.6px;top:450.57px;font-size:11.5px;color:#c2c2c2;font-weight:bold;transform:scaleX(0.8590);">Assets</span>
<span class="t" style="left:815.6px;top:470.94px;font-size:10px;color:#e2e2e2;transform:scaleX(0.9665);">Upload an asset to Welcome by clicking the New Asset button. To review feedback or</span>
<span class="t" style="left:815.6px;top:486.14px;font-size:10px;color:#e2e2e2;transform:scaleX(0.9736);">add new versions of assets, just hover over the thumbnail you want to interact with.</span>
<div class="a" style="left:815.6px;top:509.5px;width:66px;height:48.5px;background:#333333;border:1px solid #6e6e6e;border-radius:4px"></div>
<span class="t" style="left:846.3px;top:521.18px;font-size:9px;color:#dddddd;">+</span>
<span class="t" style="left:824.5px;top:536.29px;font-size:11px;color:#ececec;transform:scaleX(0.9448);">New Asset</span>
<div class="a" style="left:893px;top:509px;width:66px;height:49px;background:#fff;border-radius:4px;overflow:hidden"><div class="a" style="left:7px;top:19px;width:14px;height:14px;border-radius:50%;background:#e6e6e6"></div><div class="a" style="left:50px;top:21px;width:11px;height:11px;border-radius:50%;background:#e6e6e6"></div><div class="a" style="left:16px;top:22px;width:10px;height:3px;background:#8cbf3f;border-radius:2px"></div><div class="a" style="left:7px;top:43.5px;width:52px;height:0.6px;background:#ccc"></div><div class="a" style="left:6px;top:1.5px;width:50px;height:1px;background:#9a9a9a"></div></div>
<div class="a" style="left:902px;top:512px;width:49px;height:20px;background:#4a4a4a;border-radius:3px;box-shadow:0 0 1px #222"></div>
<span class="t" style="left:904.5px;top:518.68px;font-size:9px;color:#f0f0f0;transform:scaleX(0.9212);">+ New Draft</span>
<div class="a" style="left:909px;top:534px;width:34px;height:20px;background:#4a4a4a;border-radius:3px;box-shadow:0 0 1px #222"></div>
<span class="t" style="left:911.5px;top:540.68px;font-size:9px;color:#f0f0f0;transform:scaleX(0.9059);">Preview</span>
<div class="a" style="left:970px;top:509px;width:66px;height:49px;background:#fff;border-radius:4px;overflow:hidden"><svg width="66" height="49"><g>
<circle cx="14.2" cy="23" r="6.5" fill="#e6e6e6"/><circle cx="35.5" cy="24.6" r="6.5" fill="#e6e6e6"/><circle cx="53" cy="27.3" r="5.5" fill="#e6e6e6"/>
<rect x="14" y="29" width="0.6" height="14" fill="#e6e6e6"/><rect x="35.3" y="31" width="0.6" height="12" fill="#e6e6e6"/><rect x="52.8" y="32.5" width="0.6" height="11" fill="#e6e6e6"/>
<circle cx="21.7" cy="15.5" r="9.8" fill="#574fd1"/><circle cx="22.6" cy="14.4" r="8.9" fill="#6c63ff"/>
<circle cx="51.3" cy="9.7" r="5" fill="#ff6584"/>
<rect x="21.3" y="15" width="0.8" height="28.3" fill="#3f3d56"/>
<circle cx="28.6" cy="29.4" r="1.4" fill="#2f2e41"/><path d="M27.6 31L29.6 31L31.2 40L26.4 40Z" fill="#3f3d56"/><path d="M27.4 40L26.4 43.2M30 40L31.2 43.2" stroke="#2f2e41" stroke-width="1"/>
<rect x="6" y="43.3" width="54" height="0.5" fill="#aaa"/>
<circle cx="11" cy="42.6" r="0.7" fill="#6c63ff"/><circle cx="16" cy="42.6" r="0.7" fill="#6c63ff"/><circle cx="36" cy="42.6" r="0.7" fill="#6c63ff"/>
<circle cx="30" cy="8" r="0.5" fill="#3f3d56"/><circle cx="41" cy="14" r="0.5" fill="#3f3d56"/><circle cx="28" cy="19" r="0.5" fill="#3f3d56"/>
</g></svg></div>
<span class="t" style="left:895.9px;top:563.46px;font-size:9.5px;color:#d2d2d2;transform:scaleX(0.8925);">WalkIma....jpg</span>
<span class="t" style="left:972.8px;top:563.46px;font-size:9.5px;color:#d2d2d2;transform:scaleX(0.8918);">Walk.Im....jpg</span>
<div class="a" style="left:803px;top:652px;width:408px;height:1px;background:#4c4c4c;"></div>
<span class="t" style="left:1110.9px;top:661.63px;font-size:10px;color:#e6e6e6;transform:scaleX(0.9224);">Refresh</span>
<span class="t" style="left:1161.6px;top:661.63px;font-size:10px;color:#e6e6e6;transform:scaleX(1.0070);">Logout</span>
<div class="a" style="left:803px;top:679.5px;width:408px;height:1.5px;background:#3a3a3a;"></div>
<div class="a" style="left:803px;top:681px;width:408px;height:6px;background:#525252;"></div>
<div class="a" style="left:998px;top:682px;width:1px;height:2px;background:#444;"></div>
<div class="a" style="left:1000px;top:682px;width:1px;height:2px;background:#444;"></div>
<div class="a" style="left:1002px;top:682px;width:1px;height:2px;background:#444;"></div>
<div class="a" style="left:1004px;top:682px;width:1px;height:2px;background:#444;"></div>
<div class="a" style="left:1006px;top:682px;width:1px;height:2px;background:#444;"></div>
<div class="a" style="left:1008px;top:682px;width:1px;height:2px;background:#444;"></div>
<div class="a" style="left:1010px;top:682px;width:1px;height:2px;background:#444;"></div>
<div class="a" style="left:1012px;top:682px;width:1px;height:2px;background:#444;"></div>
<div class="a" style="left:1014px;top:682px;width:1px;height:2px;background:#444;"></div>
<div class="a" style="left:1016px;top:682px;width:1px;height:2px;background:#444;"></div>
<div class="a" style="left:1211px;top:55px;width:289px;height:754px;background:#3e3e3e;"></div>
<div class="a" style="left:1212px;top:55px;width:288px;height:11px;background:#424242;"></div>
<svg class="a" style="left:1234.5px;top:57.5px;" width="6" height="5" viewBox="0 0 6 5"><path d="M2.8 0.5L0.8 2.5L2.8 4.5M5.8 0.5L3.8 2.5L5.8 4.5" fill="none" stroke="#d0d0d0" stroke-width="1"/></svg>
<svg class="a" style="left:1488px;top:57.5px;" width="6" height="5" viewBox="0 0 6 5"><path d="M0.5 0.5L2.5 2.5L0.5 4.5M3.5 0.5L5.5 2.5L3.5 4.5" fill="none" stroke="#d0d0d0" stroke-width="1"/></svg>
<div class="a" style="left:1212px;top:66px;width:34px;height:743px;background:#474747;"></div>
<div class="a" style="left:1213px;top:66px;width:32px;height:35px;background:#535353;"></div>
<div class="a" style="left:1213px;top:102px;width:32px;height:35px;background:#535353;"></div>
<div class="a" style="left:1213px;top:138px;width:32px;height:671px;background:#535353;"></div>
<div class="a" style="left:1221px;top:68.5px;width:1px;height:2px;background:#3c3c3c;"></div>
<div class="a" style="left:1223px;top:68.5px;width:1px;height:2px;background:#3c3c3c;"></div>
<div class="a" style="left:1225px;top:68.5px;width:1px;height:2px;background:#3c3c3c;"></div>
<div class="a" style="left:1227px;top:68.5px;width:1px;height:2px;background:#3c3c3c;"></div>
<div class="a" style="left:1229px;top:68.5px;width:1px;height:2px;background:#3c3c3c;"></div>
<div class="a" style="left:1231px;top:68.5px;width:1px;height:2px;background:#3c3c3c;"></div>
<div class="a" style="left:1233px;top:68.5px;width:1px;height:2px;background:#3c3c3c;"></div>
<div class="a" style="left:1235px;top:68.5px;width:1px;height:2px;background:#3c3c3c;"></div>
<div class="a" style="left:1237px;top:68.5px;width:1px;height:2px;background:#3c3c3c;"></div>
<div class="a" style="left:1221px;top:106px;width:1px;height:2px;background:#3c3c3c;"></div>
<div class="a" style="left:1223px;top:106px;width:1px;height:2px;background:#3c3c3c;"></div>
<div class="a" style="left:1225px;top:106px;width:1px;height:2px;background:#3c3c3c;"></div>
<div class="a" style="left:1227px;top:106px;width:1px;height:2px;background:#3c3c3c;"></div>
<div class="a" style="left:1229px;top:106px;width:1px;height:2px;background:#3c3c3c;"></div>
<div class="a" style="left:1231px;top:106px;width:1px;height:2px;background:#3c3c3c;"></div>
<div class="a" style="left:1233px;top:106px;width:1px;height:2px;background:#3c3c3c;"></div>
<div class="a" style="left:1235px;top:106px;width:1px;height:2px;background:#3c3c3c;"></div>
<div class="a" style="left:1237px;top:106px;width:1px;height:2px;background:#3c3c3c;"></div>
<svg class="a" style="left:1223.5px;top:81.8px;" width="10" height="9" viewBox="0 0 10 9"><path d="M0 2.5H1.2V1.2A1.2 1.2 0 0 1 2.4 0H3.6A1.2 1.2 0 0 1 4.2 1.2V2.5H5.8V1.2A1.2 1.2 0 0 1 6.4 0H7.6A1.2 1.2 0 0 1 8.8 1.2V2.5H10V8.7H0Z" fill="#e2e2e2"/></svg>
<div class="a" style="left:1216.5px;top:112.5px;width:24.5px;height:19px;background:#3a3a3a;border-radius:2px"></div>
<div class="a" style="left:1218px;top:111.5px;width:20.5px;height:20.5px;border-radius:50%;background:#6b2fd9"></div>
<svg class="a" style="left:1220px;top:114px;" width="16" height="15" viewBox="0 0 16 15"><path d="M4.6 3.6C3.8 7 3 11 3.4 13C3.8 14 4.5 13.6 5 12.6C6.5 10 7.5 7 9 5C8.8 8 9 11 9.6 12.8C10 14 10.8 13.6 11.3 12.6C12.5 10 13.2 5.5 13.6 2.2" fill="none" stroke="#f2f2f2" stroke-width="1.3" stroke-linecap="round" stroke-linejoin="round"/></svg>
<div class="a" style="left:1248px;top:66px;width:252px;height:743px;background:#535353;"></div>
<div class="a" style="left:1285px;top:66px;width:215px;height:24px;background:#424242;"></div>
<div class="a" style="left:1338px;top:66px;width:1px;height:24px;background:#3a3a3a;"></div>
<div class="a" style="left:1394px;top:66px;width:1px;height:24px;background:#3a3a3a;"></div>
<div class="a" style="left:1444px;top:66px;width:1px;height:24px;background:#3a3a3a;"></div>
<span class="t" style="left:1256px;top:72.23px;font-size:10px;color:#f0f0f0;font-weight:bold;transform:scaleX(0.8503);">Color</span>
<span class="t" style="left:1293px;top:72.23px;font-size:10px;color:#a6a6a6;font-weight:bold;transform:scaleX(0.8215);">Swatches</span>
<span class="t" style="left:1346.7px;top:72.23px;font-size:10px;color:#a6a6a6;font-weight:bold;transform:scaleX(0.8633);">Gradients</span>
<span class="t" style="left:1402.8px;top:72.23px;font-size:10px;color:#a6a6a6;font-weight:bold;transform:scaleX(0.8497);">Patterns</span>
<div class="a" style="left:1488px;top:75px;width:7px;height:1.5px;background:#b0b0b0;"></div>
<div class="a" style="left:1488px;top:77.5px;width:7px;height:1.5px;background:#b0b0b0;"></div>
<div class="a" style="left:1488px;top:80px;width:7px;height:1.5px;background:#b0b0b0;"></div>
<div class="a" style="left:1265px;top:108px;width:16.5px;height:16.5px;background:#fff;border:1px solid #999"></div>
<div class="a" style="left:1255px;top:98px;width:19px;height:19px;background:#000;border:1px solid #888;box-shadow:0 0 0 1px #555"></div>
<div class="a" style="left:1287px;top:96px;width:166px;height:221px;background:linear-gradient(to top,rgba(0,0,0,1) 0%,rgba(0,0,0,.7) 25%,rgba(0,0,0,.42) 50%,rgba(0,0,0,.19) 75%,rgba(0,0,0,0) 100%),linear-gradient(to right,#fff,#f00)"></div>
<svg class="a" style="left:1285px;top:312px;" width="8" height="7" viewBox="0 0 8 7"><path d="M1 6.5A3.5 3.5 0 0 1 7.5 4" fill="none" stroke="#fff" stroke-width="1"/></svg>
<div class="a" style="left:1468px;top:96px;width:17px;height:221px;background:linear-gradient(to bottom,#f00 0%,#f0f 17%,#00f 33%,#0ff 50%,#0f0 67%,#ff0 83%,#f00 100%)"></div>
<svg class="a" style="left:1459px;top:313px;" width="7" height="8" viewBox="0 0 7 8"><path d="M0.5 0.5L6.5 4L0.5 7.5Z" fill="#eee"/></svg>
<div class="a" style="left:1248px;top:336px;width:252px;height:3px;background:#3e3e3e;"></div>
<div class="a" style="left:1306px;top:339px;width:194px;height:24px;background:#424242;"></div>
<div class="a" style="left:1373px;top:339px;width:1px;height:24px;background:#3a3a3a;"></div>
<div class="a" style="left:1424px;top:339px;width:1px;height:24px;background:#3a3a3a;"></div>
<span class="t" style="left:1255.6px;top:345.04px;font-size:10px;color:#f0f0f0;font-weight:bold;transform:scaleX(0.8734);">Properties</span>
<span class="t" style="left:1313.9px;top:345.04px;font-size:10px;color:#a6a6a6;font-weight:bold;transform:scaleX(0.8685);">Adjustments</span>
<span class="t" style="left:1382px;top:345.04px;font-size:10px;color:#a6a6a6;font-weight:bold;transform:scaleX(0.8428);">Libraries</span>
<div class="a" style="left:1488px;top:348px;width:7px;height:1.5px;background:#b0b0b0;"></div>
<div class="a" style="left:1488px;top:350.5px;width:7px;height:1.5px;background:#b0b0b0;"></div>
<div class="a" style="left:1488px;top:353px;width:7px;height:1.5px;background:#b0b0b0;"></div>
<div class="a" style="left:1257.5px;top:369px;width:18.5px;height:19px;background:#3d3d3d;"></div>
<svg class="a" style="left:1261px;top:372px;" width="12" height="14" viewBox="0 0 12 14"><path d="M1 0.75H7L11 4.5V13.25H1Z" fill="none" stroke="#e0e0e0" stroke-width="1.3"/><path d="M7 0.75V4.5H11" fill="none" stroke="#e0e0e0" stroke-width="1"/></svg>
<span class="t" style="left:1282px;top:374.94px;font-size:10px;color:#d0d0d0;transform:scaleX(0.8864);">Document</span>
<div class="a" style="left:1248px;top:392px;width:252px;height:1px;background:#474747;"></div>
<div class="a" style="left:1485px;top:394px;width:15px;height:138px;background:#4a4a4a;"></div>
<div class="a" style="left:1487px;top:409px;width:10px;height:37px;background:#626262;border-radius:2px"></div>
<svg class="a" style="left:1488px;top:397px;" width="9" height="5" viewBox="0 0 9 5"><path d="M1 4.5L4.5 1L8 4.5" fill="none" stroke="#888" stroke-width="1"/></svg>
<svg class="a" style="left:1488px;top:523px;" width="9" height="5" viewBox="0 0 9 5"><path d="M1 0.5L4.5 4L8 0.5" fill="none" stroke="#888" stroke-width="1"/></svg>
<svg class="a" style="left:1254px;top:403px;" width="8" height="6" viewBox="0 0 8 6"><path d="M0.5 0.5L4 4.5L7.5 0.5" fill="none" stroke="#c0c0c0" stroke-width="1"/></svg>
<span class="t" style="left:1267.8px;top:401.94px;font-size:10px;color:#e4e4e4;font-weight:bold;transform:scaleX(0.8713);">Canvas</span>
<span class="t" style="left:1294px;top:423.24px;font-size:10px;color:#cdcdcd;transform:scaleX(0.8476);">W</span>
<div class="a" style="left:1306px;top:420.5px;width:47px;height:13.5px;background:#3c3c3c;border:1px solid #333"></div>
<span class="t" style="left:1310.5px;top:423.24px;font-size:10px;color:#e6e6e6;transform:scaleX(0.8610);">1128 px</span>
<span class="t" style="left:1366.5px;top:423.24px;font-size:10px;color:#cdcdcd;transform:scaleX(0.9745);">X</span>
<div class="a" style="left:1378.5px;top:420.5px;width:46.5px;height:13.5px;background:#4c4c4c;border:1px solid #494949"></div>
<span class="t" style="left:1382.5px;top:423.24px;font-size:10px;color:#6e6e6e;transform:scaleX(0.8465);">0 px</span>
<span class="t" style="left:1296px;top:445.04px;font-size:10px;color:#cdcdcd;transform:scaleX(1.0385);">H</span>
<div class="a" style="left:1306px;top:442px;width:47px;height:14.5px;background:#3c3c3c;border:1px solid #333"></div>
<span class="t" style="left:1310.5px;top:445.04px;font-size:10px;color:#e6e6e6;transform:scaleX(0.8659);">837 px</span>
<span class="t" style="left:1367px;top:445.34px;font-size:10px;color:#cdcdcd;transform:scaleX(0.9745);">Y</span>
<div class="a" style="left:1378.5px;top:442px;width:46.5px;height:14.5px;background:#4c4c4c;border:1px solid #494949"></div>
<span class="t" style="left:1382.5px;top:445.04px;font-size:10px;color:#6e6e6e;transform:scaleX(0.8465);">0 px</span>
<svg class="a" style="left:1262px;top:431px;" width="10" height="16" viewBox="0 0 10 16"><rect x="1.5" y="1" width="6" height="7" rx="3" fill="none" stroke="#ccc" stroke-width="1.3"/><rect x="2.5" y="8" width="6" height="7" rx="3" fill="none" stroke="#ccc" stroke-width="1.3"/></svg>
<svg class="a" style="left:1311px;top:470px;" width="16" height="16" viewBox="0 0 16 16"><rect x="0.75" y="0.75" width="14" height="14.5" fill="#4a4a4a" stroke="#cfcfcf" stroke-width="1.2"/><circle cx="7.75" cy="4.5" r="2" fill="#e0e0e0"/><rect x="5" y="7" width="5.5" height="7" fill="#e0e0e0"/></svg>
<div class="a" style="left:1331px;top:468px;width:20.5px;height:20.5px;background:#383838;"></div>
<svg class="a" style="left:1333px;top:472px;" width="17" height="13" viewBox="0 0 17 13"><rect x="0.75" y="0.75" width="15.5" height="11.5" fill="none" stroke="#e6e6e6" stroke-width="1.3"/><circle cx="8.5" cy="4.5" r="1.8" fill="#e6e6e6"/><path d="M5 11C5 7 12 7 12 11Z" fill="#e6e6e6"/></svg>
<span class="t" style="left:1308.2px;top:499.94px;font-size:10px;color:#d4d4d4;transform:scaleX(0.8977);">Resolution: 72 pixels/inch</span>
<span class="t" style="left:1279.8px;top:521.83px;font-size:10px;color:#c6c6c6;transform:scaleX(0.8515);">Mode</span>
<div class="a" style="left:1248px;top:555px;width:252px;height:3px;background:#3e3e3e;"></div>
<div class="a" style="left:1290px;top:558px;width:210px;height:24px;background:#424242;"></div>
<div class="a" style="left:1341px;top:558px;width:1px;height:24px;background:#3a3a3a;"></div>
<div class="a" style="left:1380px;top:558px;width:1px;height:24px;background:#3a3a3a;"></div>
<span class="t" style="left:1255.4px;top:564.73px;font-size:10px;color:#f0f0f0;font-weight:bold;transform:scaleX(0.8342);">Layers</span>
<span class="t" style="left:1297px;top:564.73px;font-size:10px;color:#a6a6a6;font-weight:bold;transform:scaleX(0.8465);">Channels</span>
<span class="t" style="left:1350.5px;top:564.73px;font-size:10px;color:#a6a6a6;font-weight:bold;transform:scaleX(0.8225);">Paths</span>
<div class="a" style="left:1488px;top:567px;width:7px;height:1.5px;background:#b0b0b0;"></div>
<div class="a" style="left:1488px;top:569.5px;width:7px;height:1.5px;background:#b0b0b0;"></div>
<div class="a" style="left:1488px;top:572px;width:7px;height:1.5px;background:#b0b0b0;"></div>
<div class="a" style="left:1251px;top:591px;width:76px;height:16px;background:#4d4d4d;border:1px solid #4a4a4a;border-radius:2px"></div>
<svg class="a" style="left:1256px;top:594px;" width="10" height="10" viewBox="0 0 10 10"><circle cx="4" cy="4" r="3" fill="none" stroke="#7a7a7a" stroke-width="1.2"/><path d="M6.2 6.2L9 9" stroke="#7a7a7a" stroke-width="1.4"/></svg>
<span class="t" style="left:1270.4px;top:595.26px;font-size:9.5px;color:#757575;transform:scaleX(0.8940);">Kind</span>
<svg class="a" style="left:1319px;top:597px;" width="6" height="4" viewBox="0 0 6 4"><path d="M0.5 0.5L3 3L5.5 0.5" fill="none" stroke="#6f6f6f" stroke-width="0.9"/></svg>
<svg class="a" style="left:1337px;top:593px;" width="12" height="11" viewBox="0 0 12 11"><rect x="0.6" y="0.6" width="10.8" height="9" fill="none" stroke="#8f8f8f" stroke-width="1.2"/><path d="M2 8L5 5L7 7L8 6L10 8Z" fill="#8f8f8f"/></svg>
<svg class="a" style="left:1359px;top:592px;" width="11" height="11" viewBox="0 0 11 11"><circle cx="5.5" cy="5.5" r="4.6" fill="none" stroke="#8f8f8f" stroke-width="1.2"/><path d="M5.5 1A4.5 4.5 0 0 1 5.5 10Z" fill="#8f8f8f"/><path d="M1 10L10 1" stroke="#535353" stroke-width="0.01"/></svg>
<svg class="a" style="left:1380px;top:592px;" width="12" height="12" viewBox="0 0 12 12"><path d="M1 1.5H11V3.5M1 1.5V3.5M6 1.5V11M4 11H8" fill="none" stroke="#8f8f8f" stroke-width="1.3"/></svg>
<svg class="a" style="left:1401px;top:592px;" width="13" height="12" viewBox="0 0 13 12"><rect x="2" y="2" width="9" height="8" fill="none" stroke="#8f8f8f" stroke-width="1.3"/><rect x="0" y="0" width="3.5" height="3.5" fill="#8f8f8f"/><rect x="9.5" y="0" width="3.5" height="3.5" fill="#8f8f8f"/><rect x="0" y="8.5" width="3.5" height="3.5" fill="#8f8f8f"/><rect x="9.5" y="8.5" width="3.5" height="3.5" fill="#8f8f8f"/></svg>
<svg class="a" style="left:1422px;top:592px;" width="12" height="12" viewBox="0 0 12 12"><rect x="1" y="5" width="8" height="7" fill="#8f8f8f"/><path d="M4 5V3A3 3 0 0 1 10 3V5" fill="none" stroke="#8f8f8f" stroke-width="1.2"/></svg>
<div class="a" style="left:1444px;top:590px;width:8px;height:8px;border-radius:50%;background:#9a9a9a"></div>
<div class="a" style="left:1445px;top:598px;width:6px;height:6px;background:#4c4c4c;border-radius:0 0 3px 3px"></div>
<div class="a" style="left:1248px;top:609.5px;width:252px;height:1px;background:#474747;"></div>
<div class="a" style="left:1251px;top:615.5px;width:113px;height:16px;background:#4d4d4d;border:1px solid #4a4a4a;border-radius:2px"></div>
<span class="t" style="left:1257.6px;top:619.76px;font-size:9.5px;color:#777777;transform:scaleX(0.9145);">Normal</span>
<svg class="a" style="left:1355px;top:621px;" width="6" height="4" viewBox="0 0 6 4"><path d="M0.5 0.5L3 3L5.5 0.5" fill="none" stroke="#6f6f6f" stroke-width="0.9"/></svg>
<span class="t" style="left:1370.6px;top:619.56px;font-size:9.5px;color:#7a7a7a;transform:scaleX(0.9384);">Opacity:</span>
<div class="a" style="left:1406.5px;top:616px;width:32px;height:15px;background:#4b4b4b;border:1px solid #484848"></div>
<span class="t" style="left:1409px;top:619.56px;font-size:9.5px;color:#6c6c6c;transform:scaleX(0.8231);">100%</span>
<div class="a" style="left:1439.5px;top:616px;width:11px;height:15px;background:#4b4b4b;border:1px solid #484848"></div>
<svg class="a" style="left:1442px;top:622px;" width="6" height="4" viewBox="0 0 6 4"><path d="M0.5 0.5L3 3L5.5 0.5" fill="none" stroke="#6a6a6a" stroke-width="0.9"/></svg>
<div class="a" style="left:1248px;top:634.5px;width:252px;height:1px;background:#474747;"></div>
<span class="t" style="left:1252.8px;top:643.66px;font-size:9.5px;color:#7a7a7a;transform:scaleX(0.9160);">Lock:</span>
<svg class="a" style="left:1281px;top:641px;" width="12" height="12" viewBox="0 0 12 12"><rect x="0.5" y="0.5" width="11" height="11" fill="none" stroke="#8f8f8f"/><rect x="1" y="1" width="3.3" height="3.3" fill="#8f8f8f"/><rect x="7.6" y="1" width="3.3" height="3.3" fill="#8f8f8f"/><rect x="4.3" y="4.3" width="3.3" height="3.3" fill="#8f8f8f"/><rect x="1" y="7.6" width="3.3" height="3.3" fill="#8f8f8f"/><rect x="7.6" y="7.6" width="3.3" height="3.3" fill="#8f8f8f"/></svg>
<svg class="a" style="left:1300px;top:640px;" width="12" height="14" viewBox="0 0 12 14"><path d="M11 1L6 8" stroke="#8f8f8f" stroke-width="1.6"/><path d="M5.5 8C3.5 8 3 9.5 3 11C3 12 2 12.5 1.5 12.5C4 13.5 6.5 12 6.5 10Z" fill="#8f8f8f"/></svg>
<svg class="a" style="left:1318px;top:640px;" width="14" height="14" viewBox="0 0 14 14"><path d="M7 1V13M1 7H13" stroke="#8f8f8f" stroke-width="1.2"/><path d="M7 0L5 2.5H9ZM7 14L5 11.5H9ZM0 7L2.5 5V9ZM14 7L11.5 5V9Z" fill="#8f8f8f"/></svg>
<svg class="a" style="left:1338px;top:640px;" width="14" height="14" viewBox="0 0 14 14"><path d="M3 0V11H14M0 3H11V14" fill="none" stroke="#8f8f8f" stroke-width="1.2"/><path d="M6 8L10 4" stroke="#8f8f8f" stroke-width="1"/></svg>
<svg class="a" style="left:1359px;top:640px;" width="11" height="13" viewBox="0 0 11 13"><rect x="0.5" y="5.5" width="10" height="7.5" fill="#8f8f8f"/><path d="M2.5 5.5V3.5A3 3 0 0 1 8.5 3.5V5.5" fill="none" stroke="#8f8f8f" stroke-width="1.4"/></svg>
<span class="t" style="left:1389.5px;top:643.76px;font-size:9.5px;color:#7a7a7a;transform:scaleX(0.8934);">Fill:</span>
<div class="a" style="left:1406.5px;top:641.5px;width:32px;height:13.5px;background:#4b4b4b;border:1px solid #484848"></div>
<span class="t" style="left:1409px;top:643.96px;font-size:9.5px;color:#6c6c6c;transform:scaleX(0.8231);">100%</span>
<div class="a" style="left:1439.5px;top:641.5px;width:11px;height:13.5px;background:#4b4b4b;border:1px solid #484848"></div>
<svg class="a" style="left:1442px;top:646px;" width="6" height="4" viewBox="0 0 6 4"><path d="M0.5 0.5L3 3L5.5 0.5" fill="none" stroke="#6a6a6a" stroke-width="0.9"/></svg>
<div class="a" style="left:1248px;top:660px;width:252px;height:127px;background:#4d4d4d;"></div>
<div class="a" style="left:1274.5px;top:662px;width:210.5px;height:29.5px;background:#6a6a6a;"></div>
<div class="a" style="left:1248px;top:662px;width:26.5px;height:29.5px;background:#535353;"></div>
<svg class="a" style="left:1254px;top:673px;" width="13" height="9" viewBox="0 0 13 9"><path d="M0.5 4.5C3 0.5 10 0.5 12.5 4.5C10 8.5 3 8.5 0.5 4.5Z" fill="#e6e6e6"/><circle cx="6.5" cy="4.5" r="2" fill="#535353"/></svg>
<div class="a" style="left:1277px;top:665.5px;width:29px;height:23px;background:#fff;border:1px solid #3a3a3a;overflow:hidden"><svg width="27" height="21"><circle cx="9" cy="13" r="4" fill="#e6e6e6"/><circle cx="22" cy="14" r="3.5" fill="#e6e6e6"/><circle cx="10" cy="8" r="5" fill="#6c63ff"/><circle cx="20" cy="4" r="2.5" fill="#ff6584"/><path d="M12 15L14 15L15 19L11 19Z" fill="#3f3d56"/></svg></div>
<span class="t" style="left:1314.3px;top:672.76px;font-size:9.5px;color:#f0f0f0;font-style:italic;transform:scaleX(0.9349);">Background</span>
<svg class="a" style="left:1461px;top:671px;" width="11" height="12" viewBox="0 0 11 12"><rect x="1" y="5" width="9" height="6.5" fill="none" stroke="#e6e6e6" stroke-width="1.2"/><path d="M3 5V3.5A2.5 2.5 0 0 1 8 3.5V5" fill="none" stroke="#e6e6e6" stroke-width="1.2"/><rect x="5" y="7.5" width="1.2" height="2" fill="#e6e6e6"/></svg>
<div class="a" style="left:1485px;top:660px;width:15px;height:127px;background:#4a4a4a;"></div>
<div class="a" style="left:1248px;top:786px;width:252px;height:23px;background:#535353;"></div>
<div class="a" style="left:1248px;top:785.5px;width:252px;height:1px;background:#444444;"></div>
<svg class="a" style="left:1320px;top:794px;" width="13" height="7" viewBox="0 0 13 7"><rect x="0.7" y="0.7" width="6.5" height="5.3" rx="2.6" fill="none" stroke="#8c8c8c" stroke-width="1.2"/><rect x="5.3" y="0.7" width="6.5" height="5.3" rx="2.6" fill="none" stroke="#8c8c8c" stroke-width="1.2"/></svg>
<span class="t" style="left:1345px;top:791.99px;font-size:11px;color:#8c8c8c;font-style:italic;transform:scaleX(1.0519);">fx</span>
<svg class="a" style="left:1368px;top:792.5px;" width="12" height="9" viewBox="0 0 12 9"><rect x="0" y="0" width="11.6" height="8.4" fill="#d8d8d8"/><circle cx="5.8" cy="4.2" r="2.6" fill="#535353"/></svg>
<svg class="a" style="left:1393px;top:792px;" width="13" height="13" viewBox="0 0 13 13"><circle cx="5" cy="5" r="4.4" fill="none" stroke="#d8d8d8" stroke-width="1.2"/><path d="M1.9 8.1L8.1 1.9A4.4 4.4 0 0 1 1.9 8.1Z" fill="#d8d8d8"/><rect x="9.5" y="10" width="2" height="2" fill="#eee"/></svg>
<svg class="a" style="left:1416px;top:792px;" width="12" height="10" viewBox="0 0 12 10"><path d="M0 0.5H4.5L5.5 2H11V9.5H0Z" fill="#d8d8d8"/></svg>
<svg class="a" style="left:1439.5px;top:792px;" width="11" height="11" viewBox="0 0 11 11"><rect x="0.6" y="0.6" width="9.4" height="9.4" fill="none" stroke="#d8d8d8" stroke-width="1.2"/><path d="M5.3 3V7.6M3 5.3H7.6" stroke="#d8d8d8" stroke-width="1.4"/></svg>
<svg class="a" style="left:1464px;top:792px;" width="11" height="11" viewBox="0 0 11 11"><path d="M0.5 1.5H10M3.5 0.5H7M1.5 2L2.3 10.5H8.2L9 2" fill="none" stroke="#8c8c8c" stroke-width="1.1"/><path d="M4 3.5V9M5.25 3.5V9M6.5 3.5V9" stroke="#8c8c8c" stroke-width="0.7"/></svg>
</body></html>
